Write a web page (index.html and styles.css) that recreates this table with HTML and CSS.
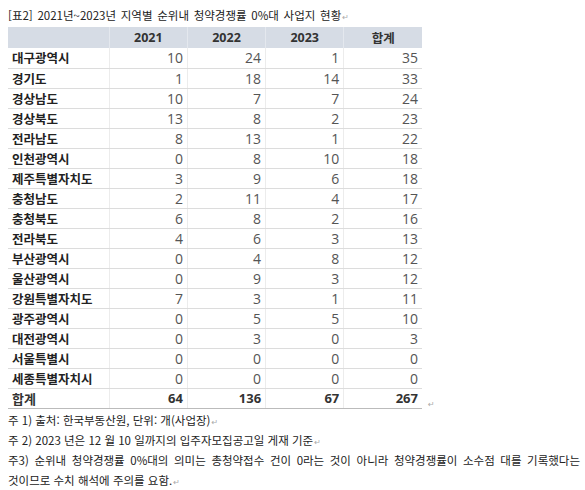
FILE: index.html
```html
<!DOCTYPE html>
<html lang="ko">
<head>
<meta charset="utf-8">
<link rel="stylesheet" href="styles.css">
</head>
<body>
<div class="page">
  <p class="title">[표2] 2021년~2023년 지역별 순위내 청약경쟁률 0%대 사업지 현황<span class="pm">↵</span></p>
  <div class="table-wrap">
    <table class="data">
      <thead>
        <tr><th class="name"></th><th>2021</th><th>2022</th><th>2023</th><th>합계</th></tr>
      </thead>
      <tbody>
        <tr><td class="name">대구광역시</td><td>10</td><td>24</td><td>1</td><td>35</td></tr>
        <tr><td class="name">경기도</td><td>1</td><td>18</td><td>14</td><td>33</td></tr>
        <tr><td class="name">경상남도</td><td>10</td><td>7</td><td>7</td><td>24</td></tr>
        <tr><td class="name">경상북도</td><td>13</td><td>8</td><td>2</td><td>23</td></tr>
        <tr><td class="name">전라남도</td><td>8</td><td>13</td><td>1</td><td>22</td></tr>
        <tr><td class="name">인천광역시</td><td>0</td><td>8</td><td>10</td><td>18</td></tr>
        <tr><td class="name">제주특별자치도</td><td>3</td><td>9</td><td>6</td><td>18</td></tr>
        <tr><td class="name">충청남도</td><td>2</td><td>11</td><td>4</td><td>17</td></tr>
        <tr><td class="name">충청북도</td><td>6</td><td>8</td><td>2</td><td>16</td></tr>
        <tr><td class="name">전라북도</td><td>4</td><td>6</td><td>3</td><td>13</td></tr>
        <tr><td class="name">부산광역시</td><td>0</td><td>4</td><td>8</td><td>12</td></tr>
        <tr><td class="name">울산광역시</td><td>0</td><td>9</td><td>3</td><td>12</td></tr>
        <tr><td class="name">강원특별자치도</td><td>7</td><td>3</td><td>1</td><td>11</td></tr>
        <tr><td class="name">광주광역시</td><td>0</td><td>5</td><td>5</td><td>10</td></tr>
        <tr><td class="name">대전광역시</td><td>0</td><td>3</td><td>0</td><td>3</td></tr>
        <tr><td class="name">서울특별시</td><td>0</td><td>0</td><td>0</td><td>0</td></tr>
        <tr><td class="name">세종특별자치시</td><td>0</td><td>0</td><td>0</td><td>0</td></tr>
        <tr class="total"><td class="name">합계</td><td>64</td><td>136</td><td>67</td><td>267</td></tr>
      </tbody>
    </table>
    <span class="pm table-pm">↵</span>
  </div>
  <div class="notes">
    <p>주 1) 출처: 한국부동산원, 단위: 개(사업장)<span class="pm">↵</span></p>
    <p>주 2) 2023 년은 12 월 10 일까지의 입주자모집공고일 게재 기준<span class="pm">↵</span></p>
    <p class="justify">주3) 순위내 청약경쟁률 0%대의 의미는 총청약접수 건이 0라는 것이 아니라 청약경쟁률이 소수점 대를 기록했다는 것이므로 수치 해석에 주의를 요함.<span class="pm">↵</span></p>
  </div>
</div>
</body>
</html>
```

FILE: styles.css
```css
* { box-sizing: border-box; }
html, body { margin: 0; padding: 0; background: #fff; }
.page {
  padding: 5px 7px 0 8px;
  font-family: "Noto Sans CJK KR", "Noto Sans", sans-serif;
  color: #222;
}
.title {
  margin: 0;
  font-size: 11.5px;
  line-height: 20px;
  word-spacing: 1.5px;
  color: #222;
}
.pm {
  font-family: "DejaVu Sans", sans-serif;
  color: #aaa;
  font-size: 8px;
  line-height: 0;
  margin-left: 1px;
}
.table-wrap {
  display: flex;
  align-items: flex-end;
  margin-top: 2px;
}
.table-pm { margin-left: 6px; margin-bottom: 0; line-height: 8px; }
.data {
  border-collapse: collapse;
  table-layout: fixed;
  width: 414px;
}
.data th, .data td {
  height: 20px;
  padding: 0 4px;
  border-bottom: 1px solid #dcdcdc;
  border-left: 1px solid #ececec;
  white-space: nowrap;
}
.data th:first-child, .data td:first-child { border-left: none; }
.data th {
  height: 21px;
  background: #d6dce5;
  font-family: "Open Sans", "Noto Sans CJK KR", sans-serif;
  font-weight: 700;
  font-size: 12.5px;
  color: #333;
  text-align: center;
  border-left: 1px solid #e4e8ee;
  border-bottom: none;
}
.data th.name { width: 101px; }
.data th:not(.name) { width: 78px; }
.data td {
  font-family: "Open Sans", "Noto Sans CJK KR", sans-serif;
  font-size: 14px;
  font-weight: 400;
  color: #555;
  text-align: right;
  line-height: 19px;
}
.data td.name {
  font-family: "Noto Sans CJK KR", sans-serif;
  font-weight: 700;
  font-size: 12.5px;
  color: #222;
  text-align: left;
}
.data tr.total td {
  font-weight: 700;
  font-size: 13px;
  color: #333;
  border-bottom: 1px solid #bbb;
}
.notes {
  margin-top: 1px;
  width: 572px;
  font-size: 11.5px;
  line-height: 20px;
  color: #222;
}
.notes p { margin: 0; }
.notes .justify { text-align: justify; word-break: keep-all; }
```
